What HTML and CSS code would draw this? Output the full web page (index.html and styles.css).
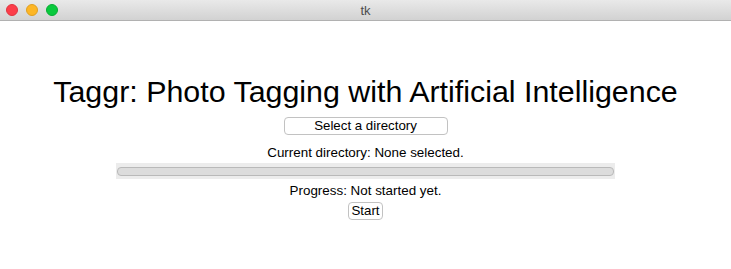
FILE: index.html
```html
<!DOCTYPE html>
<html lang="en">
<head>
  <meta charset="UTF-8" />
  <title>tk</title>
  <link rel="stylesheet" href="styles.css">
</head>
<body>
  <div class="titlebar">
    <div class="lights">
      <span class="light red"></span>
      <span class="light yellow"></span>
      <span class="light green"></span>
    </div>
    <div class="wintitle">tk</div>
  </div>
  <div class="main">
    <h1>Taggr: Photo Tagging with Artificial Intelligence</h1>
    <button class="btn wide">Select a directory</button>
    <div class="label">Current directory: None selected.</div>
    <div class="progress"><div class="track"></div></div>
    <div class="label">Progress: Not started yet.</div>
    <button class="btn">Start</button>
  </div>
</body>
</html>
```

FILE: styles.css
```css
body {
  margin: 0;
  font-family: "Liberation Sans", Arial, sans-serif;
  background: #fff;
  color: #000;
}
.titlebar {
  position: relative;
  height: 21px;
  background: linear-gradient(#e9e9e9, #d2d2d2);
  border-bottom: 1px solid #b1b1b1;
  box-sizing: border-box;
}
.lights {
  display: flex;
  gap: 8px;
  padding: 4px 0 0 6px;
}
.light {
  width: 12px;
  height: 12px;
  border-radius: 50%;
}
.red { background: #fc3d49; border: 0.5px solid #e0343f; box-sizing: border-box; }
.yellow { background: #fdb625; border: 0.5px solid #e0a020; box-sizing: border-box; }
.green { background: #09c93d; border: 0.5px solid #07ad33; box-sizing: border-box; }
.wintitle {
  position: absolute;
  top: 0;
  left: 0;
  right: 0;
  text-align: center;
  font-family: "Liberation Sans", sans-serif;
  font-size: 13px;
  line-height: 21px;
  color: #4d4d4d;
}
.main {
  display: flex;
  flex-direction: column;
  align-items: center;
  padding-top: 49px;
}
h1 {
  margin: 0 0 5px;
  font-weight: normal;
  font-size: 30.4px;
  line-height: 42px;
}
.btn {
  font-family: "Liberation Sans", Arial, sans-serif;
  font-size: 13.3px;
  background: #fff;
  border: 1px solid #c2c2c2;
  border-radius: 4px;
  height: 18px;
  padding: 0 2px;
  line-height: 16px;
  color: #000;
}
.btn.wide {
  width: 164px;
}
.label {
  font-size: 13.4px;
  line-height: 16px;
  margin-top: 10px;
}
.progress {
  width: 499px;
  height: 16px;
  background: #ececec;
  margin-top: 2px;
  display: flex;
  align-items: center;
  padding: 0 1px;
  box-sizing: border-box;
}
.track {
  flex: 1;
  height: 7px;
  background: #dcdcdc;
  border: 1px solid #b9b9b9;
  border-radius: 4px;
}
.progress + .label {
  margin-top: 4px;
}
.label + .btn {
  margin-top: 3px;
}
```
